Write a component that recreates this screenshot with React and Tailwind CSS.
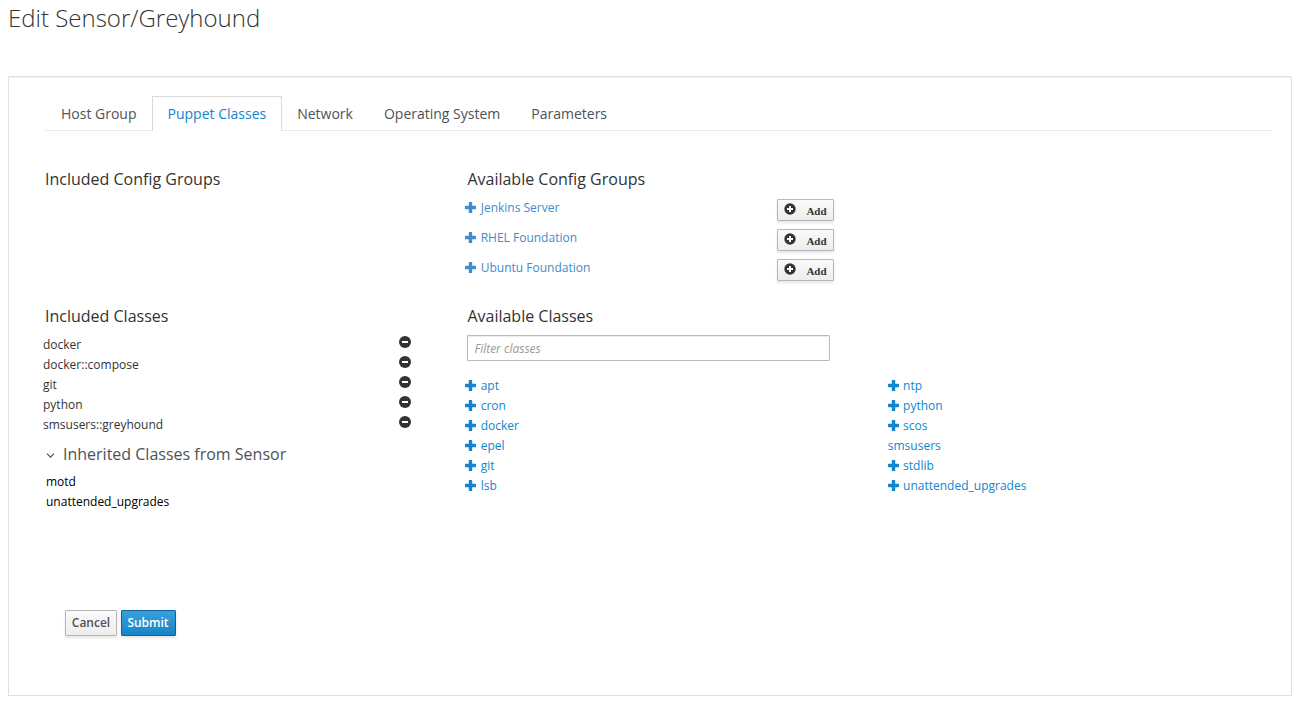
const tabs = ['Host Group', 'Puppet Classes', 'Network', 'Operating System', 'Parameters'];
const configGroups = ['Jenkins Server', 'RHEL Foundation', 'Ubuntu Foundation'];
const includedClasses = ['docker', 'docker::compose', 'git', 'python', 'smsusers::greyhound'];
const inheritedClasses = ['motd', 'unattended_upgrades'];
const availableLeft = ['apt', 'cron', 'docker', 'epel', 'git', 'lsb'];
const availableRight = ['ntp', 'python', 'scos', 'smsusers', 'stdlib', 'unattended_upgrades'];

function Plus() {
  return (
    <svg className="mb-[1px] mr-[4.3px] h-[11px] w-[11px] shrink-0" viewBox="0 0 11 11" fill="currentColor">
      <path d="M4.4 0h2.2q.6 0 .6.6v3.2h3.2q.6 0 .6.6v2.2q0 .6-.6.6H7.2v3.2q0 .6-.6.6H4.4q-.6 0-.6-.6V7.2H.6Q0 7.2 0 6.6V4.4q0-.6.6-.6h3.2V.6q0-.6.6-.6z" />
    </svg>
  );
}

function Minus() {
  return (
    <svg className="h-3 w-3" viewBox="0 0 12 12">
      <circle cx="6" cy="6" r="6" fill="#333333" />
      <rect x="3" y="5" width="6" height="2" fill="#ffffff" />
    </svg>
  );
}

function PlusCircle() {
  return (
    <svg className="-mt-[1px] h-3 w-3" viewBox="0 0 12 12">
      <circle cx="6" cy="6" r="5.7" fill="#333333" />
      <path d="M5 3h2v2h2v2H7v2H5V7H3V5h2z" fill="#f5f5f5" />
    </svg>
  );
}

function Heading({ children }) {
  return <h3 className="h-[18px] text-[16px] leading-[18px] text-[#333333]">{children}</h3>;
}

function ClassList({ items }) {
  return (
    <ul className="w-[422.4px]">
      {items.map((name) => (
        <li key={name} className="flex h-5 items-center text-[#1186ce]">
          {name !== 'smsusers' && <Plus />}
          <a>{name}</a>
        </li>
      ))}
    </ul>
  );
}

export default function App() {
  return (
    <div className="h-[708px] overflow-hidden bg-white px-2 font-['Open_Sans',sans-serif] text-[12px] leading-5 text-[#333333]">
      <h1 className="h-[76px] pt-[5px] text-[24px] font-light leading-[26px]">Edit Sensor/Greyhound</h1>
      <main className="h-[620px] border border-[#dfdfdf] pl-9 pr-[19px] pt-[19px] shadow-[inset_0_1px_1px_rgba(0,0,0,0.04)]">
        <nav className="flex h-[35px] border-b border-[#e9e9e9] text-[14px] text-[#4d5258]">
          {tabs.map((tab) => (
            <a
              key={tab}
              className={
                tab === 'Puppet Classes'
                  ? 'h-[35px] border border-b-0 border-[#dadada] bg-white px-[15px] pt-[7px] text-[#1186ce]'
                  : 'h-[34px] pl-[15px] pr-4 pt-2 first:pl-4 first:pr-[15px]'
              }
            >
              {tab}
            </a>
          ))}
        </nav>

        <section className="flex h-[137px] pt-[39px]">
          <div className="w-[422.4px] shrink-0">
            <Heading>Included Config Groups</Heading>
          </div>
          <div className="w-[366.6px] shrink-0">
            <Heading>Available Config Groups</Heading>
            <ul className="-ml-0.5 mt-2.5">
              {configGroups.map((group) => (
                <li key={group} className="flex h-[30px] justify-between">
                  <a className="flex h-5 items-center text-[#428bca]">
                    <Plus />
                    {group}
                  </a>
                  <button className="mt-[1px] flex h-[22px] w-[57px] justify-between rounded-[1px] border border-[#b7b7b7] bg-linear-to-b from-[#fafafa] to-[#ededed] pl-1.5 pr-[6.4px] pt-1 shadow-[0_2px_3px_rgba(0,0,0,0.1)]">
                    <PlusCircle />
                    <span className="font-['Liberation_Serif',serif] text-[11px] font-bold leading-[15px]">Add</span>
                  </button>
                </li>
              ))}
            </ul>
          </div>
        </section>

        <section className="flex h-[342px] pt-[39px]">
          <div className="w-[422.4px] shrink-0">
            <Heading>Included Classes</Heading>
            <ul className="-ml-0.5 mt-2.5 w-[368px]">
              {includedClasses.map((name) => (
                <li key={name} className="flex h-5 justify-between">
                  <span>{name}</span>
                  <span className="pt-[1px]">
                    <Minus />
                  </span>
                </li>
              ))}
            </ul>
            <h3 className="mt-[9px] flex h-5 items-center text-[16px] leading-5 text-[#4d5258]">
              <svg className="ml-[1px] mr-2 mt-[3px] h-[9px] w-[9px]" viewBox="0 0 9 9" fill="none" stroke="currentColor" strokeWidth="1.2">
                <path d="M1 2.7 4.5 6.2 8 2.7" />
              </svg>
              Inherited Classes from Sensor
            </h3>
            <ul className="ml-[1px] mt-2 text-black">
              {inheritedClasses.map((name) => (
                <li key={name}>{name}</li>
              ))}
            </ul>
          </div>
          <div className="shrink-0">
            <Heading>Available Classes</Heading>
            <input
              className="mt-2.5 block h-[26px] w-[363px] rounded-[1px] border border-[#bababa] px-1.5 text-[12px] shadow-[inset_0_1px_1px_rgba(0,0,0,0.075)] placeholder:italic placeholder:text-[#999999]"
              placeholder="Filter classes"
            />
            <div className="-ml-0.5 mt-[15px] flex">
              <ClassList items={availableLeft} />
              <ClassList items={availableRight} />
            </div>
          </div>
        </section>

        <footer className="flex gap-1 pl-5 font-semibold">
          <button className="h-[26px] w-[52px] rounded-[1px] border border-[#b7b7b7] bg-linear-to-b from-[#fafafa] to-[#ededed] text-[#4d5258] shadow-[0_2px_3px_rgba(0,0,0,0.1)]">
            Cancel
          </button>
          <button className="h-[26px] w-[55px] rounded-[1px] border border-[#0f5f9a] bg-linear-to-b from-[#37a0dc] to-[#1784c7] pr-[1px] text-white shadow-[0_2px_3px_rgba(0,0,0,0.1)]">
            Submit
          </button>
        </footer>
      </main>
    </div>
  );
}
